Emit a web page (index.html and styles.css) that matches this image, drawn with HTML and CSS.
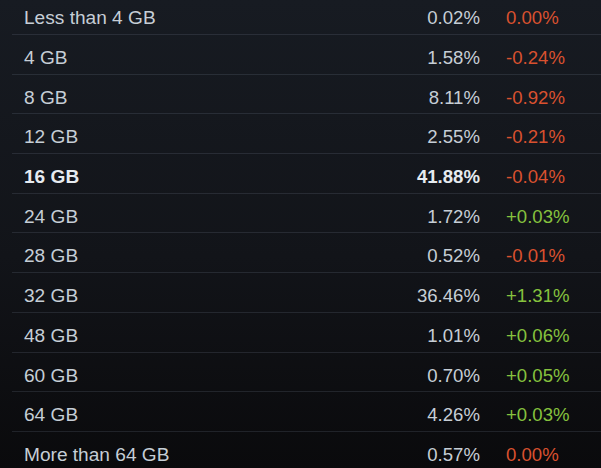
FILE: index.html
```html
<!DOCTYPE html>
<html lang="en">
<head>
<meta charset="utf-8">
<title>RAM</title>
<link rel="stylesheet" href="styles.css">
</head>
<body>
<div class="table">
  <div class="row"><span class="label">Less than 4 GB</span><span class="pct">0.02%</span><span class="chg neg">0.00%</span></div>
  <div class="row"><span class="label">4 GB</span><span class="pct">1.58%</span><span class="chg neg">-0.24%</span></div>
  <div class="row"><span class="label">8 GB</span><span class="pct">8.11%</span><span class="chg neg">-0.92%</span></div>
  <div class="row"><span class="label">12 GB</span><span class="pct">2.55%</span><span class="chg neg">-0.21%</span></div>
  <div class="row top"><span class="label">16 GB</span><span class="pct">41.88%</span><span class="chg neg">-0.04%</span></div>
  <div class="row"><span class="label">24 GB</span><span class="pct">1.72%</span><span class="chg pos">+0.03%</span></div>
  <div class="row"><span class="label">28 GB</span><span class="pct">0.52%</span><span class="chg neg">-0.01%</span></div>
  <div class="row"><span class="label">32 GB</span><span class="pct">36.46%</span><span class="chg pos">+1.31%</span></div>
  <div class="row"><span class="label">48 GB</span><span class="pct">1.01%</span><span class="chg pos">+0.06%</span></div>
  <div class="row"><span class="label">60 GB</span><span class="pct">0.70%</span><span class="chg pos">+0.05%</span></div>
  <div class="row"><span class="label">64 GB</span><span class="pct">4.26%</span><span class="chg pos">+0.03%</span></div>
  <div class="row last"><span class="label">More than 64 GB</span><span class="pct">0.57%</span><span class="chg neg">0.00%</span></div>
</div>
</body>
</html>
```
FILE: styles.css
```css
html, body {
  margin: 0;
  padding: 0;
  height: 100%;
  overflow: hidden;
}
body {
  background: linear-gradient(to bottom, #171b22 0%, #121419 55%, #0a0a0c 100%);
  font-family: "Liberation Sans", Arial, sans-serif;
  font-size: 18.6px;
  color: #c6ced6;
}
.table {
  margin-top: -4.7px;
  padding-left: 12px;
}
.row {
  display: grid;
  grid-template-columns: 1fr auto 95px;
  align-items: baseline;
  padding: 12px 0 4.7px;
  line-height: 22px;
  border-bottom: 1px solid rgba(120, 132, 148, 0.2);
}
.row.last {
  border-bottom: none;
}
.label {
  padding-left: 12px;
  font-size: 19.1px;
}
.pct {
  text-align: right;
  padding-right: 26px;
}
.chg {
  text-align: left;
}
.neg { color: #d9512f; }
.pos { color: #86c23e; }
.top .label, .top .pct {
  font-weight: bold;
  color: #e6ebf0;
}
```
